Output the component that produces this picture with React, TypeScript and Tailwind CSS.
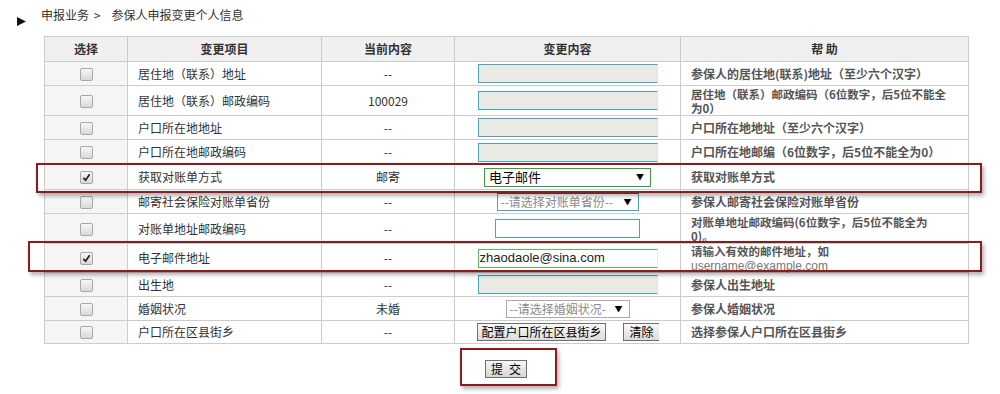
import React from 'react';

type Row = {
  item: string;
  current: string;
  field: React.ReactNode;
  help: React.ReactNode;
  h: string;
  checked?: boolean;
};

function Box({ checked }: { checked?: boolean }) {
  return (
    <span className="inline-flex h-[13px] w-[13px] items-center justify-center rounded-[2px] border border-[#a8a8a8] bg-gradient-to-b from-[#f6f6f6] to-[#d9d9d9] align-middle">
      {checked && (
        <svg width="9" height="9" viewBox="0 0 10 10">
          <path d="M1.5 5.5 L4 8 L8.5 1.5" fill="none" stroke="#222" strokeWidth="2" />
        </svg>
      )}
    </span>
  );
}

function GrayInput() {
  return (
    <div className="mx-auto h-[19px] w-[180px] border border-[#4aa3c0] border-r-[#c4f0f8] bg-[#ebe9e4]" />
  );
}

function Arrow() {
  return <span className="text-[8px] leading-none text-black">▼</span>;
}

// two-line help text, 14px per line as in the reference
function TwoLines({ a, b }: { a: React.ReactNode; b: React.ReactNode }) {
  return (
    <div className="flex flex-col">
      <span className="block h-[14px] text-[11.5px] leading-[14px]">{a}</span>
      <span className="block h-[14px] text-[11.5px] leading-[14px]">{b}</span>
    </div>
  );
}

const rows: Row[] = [
  {
    item: '居住地（联系）地址',
    current: '--',
    field: <GrayInput />,
    help: '参保人的居住地(联系)地址（至少六个汉字）',
    h: 'h-[24px]',
  },
  {
    item: '居住地（联系）邮政编码',
    current: '100029',
    field: <GrayInput />,
    help: <TwoLines a="居住地（联系）邮政编码（6位数字，后5位不能全" b="为0）" />,
    h: 'h-[30px]',
  },
  {
    item: '户口所在地地址',
    current: '--',
    field: <GrayInput />,
    help: '户口所在地地址（至少六个汉字）',
    h: 'h-[24px]',
  },
  {
    item: '户口所在地邮政编码',
    current: '--',
    field: <GrayInput />,
    help: '户口所在地邮编（6位数字，后5位不能全为0）',
    h: 'h-[25px]',
  },
  {
    item: '获取对账单方式',
    current: '邮寄',
    checked: true,
    field: (
      <div className="mx-auto flex h-[19px] w-[167px] items-center justify-between border border-[#3f9b3f] bg-white pl-[4px] pr-[6px] text-left text-[13px] text-black">
        <span>电子邮件</span>
        <Arrow />
      </div>
    ),
    help: '获取对账单方式',
    h: 'h-[25px]',
  },
  {
    item: '邮寄社会保险对账单省份',
    current: '--',
    field: (
      <div className="mx-auto flex h-[18px] w-[142px] items-center justify-between border border-[#4aa3c0] border-t-[#555] bg-white pl-[3px] pr-[6px] text-left text-[12px] text-[#8a8a8a]">
        <span>--请选择对账单省份--</span>
        <Arrow />
      </div>
    ),
    help: '参保人邮寄社会保险对账单省份',
    h: 'h-[24px]',
  },
  {
    item: '对账单地址邮政编码',
    current: '--',
    field: <div className="mx-auto h-[19px] w-[145px] border border-[#4aa3c0] bg-white" />,
    help: <TwoLines a="对账单地址邮政编码(6位数字，后5位不能全为" b="0)。" />,
    h: 'h-[30px]',
  },
  {
    item: '电子邮件地址',
    current: '--',
    checked: true,
    field: (
      <div className="mx-auto flex h-[19px] w-[180px] items-center border border-[#5cb85c] border-r-[#d6f5d6] bg-white pl-[1px] text-left font-['Liberation_Sans',Arial,sans-serif] text-[13px] text-[#222]">
        zhaodaole@sina.com
      </div>
    ),
    help: (
      <TwoLines
        a="请输入有效的邮件地址，如"
        b={
          <span className="font-['Liberation_Sans',Arial,sans-serif] text-[12px] font-normal text-[#777]">
            username@example.com
          </span>
        }
      />
    ),
    h: 'h-[29px]',
  },
  {
    item: '出生地',
    current: '--',
    field: <GrayInput />,
    help: '参保人出生地址',
    h: 'h-[24px]',
  },
  {
    item: '婚姻状况',
    current: '未婚',
    field: (
      <div className="mx-auto flex h-[18px] w-[124px] items-center justify-between border border-[#aaaaaa] bg-white pl-[3px] pr-[6px] text-left text-[12px] text-[#8a8a8a]">
        <span>--请选择婚姻状况-</span>
        <Arrow />
      </div>
    ),
    help: '参保人婚姻状况',
    h: 'h-[24px]',
  },
  {
    item: '户口所在区县街乡',
    current: '--',
    field: (
      <div className="flex items-center justify-center gap-[17px] pl-[1px]">
        <div className="flex h-[18px] w-[129px] items-center justify-center border border-[#6f6f6f] bg-gradient-to-b from-[#f8f8f8] to-[#dcdcdc] text-[12px] text-black">
          配置户口所在区县街乡
        </div>
        <div className="flex h-[18px] w-[36px] items-center justify-center border border-[#6f6f6f] border-r-0 bg-gradient-to-b from-[#f8f8f8] to-[#dcdcdc] text-[12px] text-black">
          清除
        </div>
      </div>
    ),
    help: '选择参保人户口所在区县街乡',
    h: 'h-[23px]',
  },
];

export default function App() {
  return (
    <div className="relative h-[394px] w-[1000px] overflow-hidden bg-white font-['Noto_Sans_CJK_SC','Liberation_Sans',sans-serif] text-[12px] text-[#333]">
      {/* breadcrumb */}
      <div className="flex h-[36px] items-start">
        <svg className="ml-[17px] mt-[17px]" width="9" height="9" viewBox="0 0 9 9">
          <path d="M0 0 L9 4.5 L0 9 Z" fill="#111" />
        </svg>
        <div className="ml-[15px] pt-[7px] leading-[16px] text-[#333]">
          申报业务 <span className="ml-[2px]">&gt;</span>
          <span className="ml-[11px]">参保人申报变更个人信息</span>
        </div>
      </div>

      {/* table */}
      <table className="ml-[44px] w-[924px] table-fixed border-collapse">
        <colgroup>
          <col className="w-[83px]" />
          <col className="w-[194px]" />
          <col className="w-[133px]" />
          <col className="w-[226px]" />
          <col className="w-[288px]" />
        </colgroup>
        <thead>
          <tr className="h-[25px] bg-[#f0f0f0] font-bold text-[#333]">
            <th className="border border-[#cccccc] p-0">选择</th>
            <th className="border border-[#cccccc] p-0">变更项目</th>
            <th className="border border-[#cccccc] p-0">当前内容</th>
            <th className="border border-[#cccccc] p-0">变更内容</th>
            <th className="border border-[#cccccc] p-0">帮 助</th>
          </tr>
        </thead>
        <tbody>
          {rows.map((r, i) => (
            <tr key={i} className={r.h}>
              <td className="border border-[#cccccc] bg-[#f5f5f5] p-0 text-center leading-none">
                <Box checked={r.checked} />
              </td>
              <td className="border border-[#cccccc] py-0 pl-[10px] pr-0 text-[#333]">{r.item}</td>
              <td className="border border-[#cccccc] p-0 text-center text-[#333]">{r.current}</td>
              <td className="border border-[#cccccc] p-0 text-center">{r.field}</td>
              <td className="border border-[#cccccc] py-0 pl-[10px] pr-0 font-bold leading-[14px] text-[#555]">
                {r.help}
              </td>
            </tr>
          ))}
        </tbody>
      </table>

      {/* submit */}
      <div className="ml-[44px] mt-[16px] flex w-[924px] justify-center">
        <div className="flex h-[18px] w-[42px] items-center justify-center border border-[#6f6f6f] bg-gradient-to-b from-[#f8f8f8] to-[#d6d6d6] text-[12px] text-black">
          <span>提</span>
          <span className="ml-[6px]">交</span>
        </div>
      </div>

      {/* red highlight frames */}
      <div className="absolute left-[36px] top-[163px] h-[30px] w-[946px] border-2 border-[#8e1b1b] shadow-[2px_3px_4px_rgba(0,0,0,0.3)]" />
      <div className="absolute left-[28px] top-[241px] h-[31px] w-[954px] border-2 border-[#8e1b1b] shadow-[2px_3px_4px_rgba(0,0,0,0.3)]" />
      <div className="absolute left-[460px] top-[348px] h-[38px] w-[97px] border-2 border-[#8e1b1b] shadow-[2px_3px_4px_rgba(0,0,0,0.3)]" />
    </div>
  );
}
